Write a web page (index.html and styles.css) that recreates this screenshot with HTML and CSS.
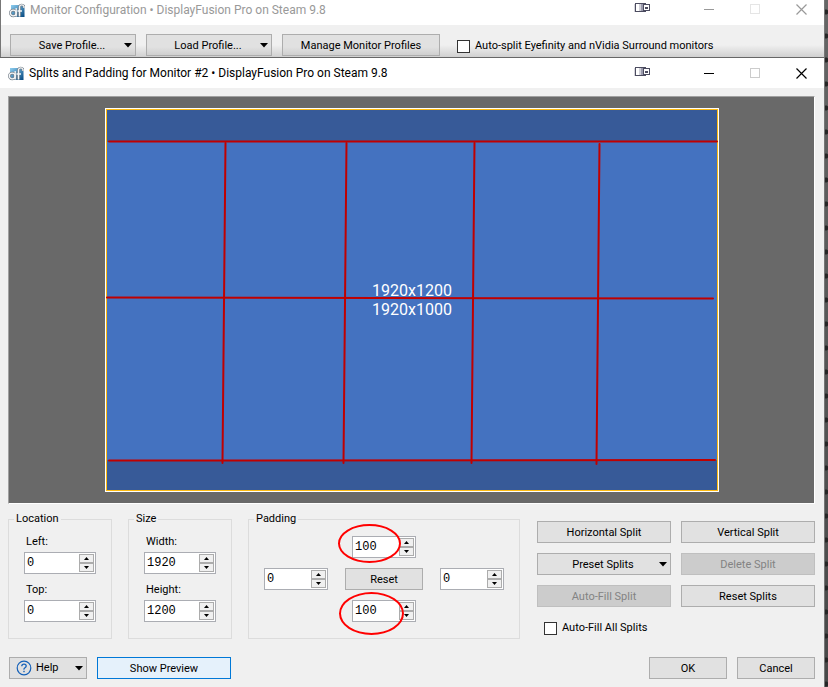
FILE: index.html
```
<!DOCTYPE html>
<html lang="en">
<head>
<meta charset="utf-8">
<title>Splits and Padding for Monitor #2</title>
<link rel="stylesheet" href="styles.css">
</head>
<body>
<svg class="defs" aria-hidden="true">
  <linearGradient id="tile" x1="0" y1="0" x2="1" y2="1"><stop offset="0" stop-color="#8fd0f2"/><stop offset="1" stop-color="#05477f"/></linearGradient>
  <symbol id="app" viewBox="0 0 16 16">
    <rect x="2" y="3" width="13.500" height="12" fill="url(#tile)"/>
    <g fill="none" stroke="#77818a" stroke-width="2.600"><circle cx="4.200" cy="11" r="2.900"/><path d="M7.200 14.500V7M10.500 14.500V4.500A2.400 2.400 0 0 1 15 4.500V6"/></g>
    <g fill="none" stroke="#f4f6f8" stroke-width="1.300"><circle cx="4.200" cy="11" r="2.900"/><path d="M7.200 14.500V6M10.500 14.500V4.500A2.400 2.400 0 0 1 15 4.500V6M8.500 9H13"/></g>
  </symbol>
  <symbol id="monitors" viewBox="0 0 17 11">
    <path d="M0 2H6V10H0Z" fill="#d5d5dc"/>
    <rect x="1.500" y="1.500" width="10" height="8" fill="#fff" stroke="#4c4c60"/>
    <path d="M5 2H7V9H5Z" fill="#d0d0d8"/><path d="M7 2H9V9H7Z" fill="#9a9aac"/>
    <rect x="9.500" y="2.500" width="6" height="6" fill="#fff" stroke="#4c4c60"/><path d="M11 5H14V7H11Z" fill="#4c4c60"/>
  </symbol>
  <symbol id="min" viewBox="0 0 11 11"><path d="M0 5.500H10" stroke="currentColor"/></symbol>
  <symbol id="max" viewBox="0 0 11 11"><rect x=".5" y=".5" width="9" height="9" fill="none" stroke="currentColor"/></symbol>
  <symbol id="close" viewBox="0 0 11 11"><path d="M.5 .5L10.500 10.500M10.500 .5L.5 10.500" stroke="currentColor" stroke-width="1.200"/></symbol>
  <symbol id="down" viewBox="0 0 8 5"><path d="M0 0H8L4 4.600Z" fill="#000"/></symbol>
  <symbol id="tiny-up" viewBox="0 0 5 3"><path d="M0 3L2.500 0L5 3Z" fill="#000"/></symbol>
  <symbol id="tiny-down" viewBox="0 0 5 3"><path d="M0 0L2.500 3L5 0Z" fill="#000"/></symbol>
</svg>
<div class="desktop">
  <main class="windows">
    <section class="window back">
      <header class="titlebar">
        <svg class="app-icon"><use href="#app"/></svg>
        <h2>Monitor Configuration • DisplayFusion Pro on Steam 9.8</h2>
        <button class="cap screens" aria-label="Move to next monitor"><svg><use href="#monitors"/></svg></button>
        <button class="cap" aria-label="Minimize"><svg><use href="#min"/></svg></button>
        <button class="cap pale" aria-label="Maximize" disabled><svg><use href="#max"/></svg></button>
        <button class="cap" aria-label="Close"><svg><use href="#close"/></svg></button>
      </header>
      <div class="toolbar">
        <button class="btn menu"><span>Save Profile...</span><svg class="caret"><use href="#down"/></svg></button>
        <button class="btn menu"><span>Load Profile...</span><svg class="caret"><use href="#down"/></svg></button>
        <button class="btn manage">Manage Monitor Profiles</button>
        <label class="check"><input type="checkbox">Auto-split Eyefinity and nVidia Surround monitors</label>
      </div>
    </section>
    <section class="window front">
      <header class="titlebar">
        <svg class="app-icon"><use href="#app"/></svg>
        <h1>Splits and Padding for Monitor #2 • DisplayFusion Pro on Steam 9.8</h1>
        <button class="cap screens" aria-label="Move to next monitor"><svg><use href="#monitors"/></svg></button>
        <button class="cap" aria-label="Minimize"><svg><use href="#min"/></svg></button>
        <button class="cap pale" aria-label="Maximize" disabled><svg><use href="#max"/></svg></button>
        <button class="cap" aria-label="Close"><svg><use href="#close"/></svg></button>
      </header>
      <div class="content">
        <div class="canvas">
          <svg class="monitor" viewBox="0 0 614 384">
            <rect width="614" height="384" fill="#fff"/>
            <rect x="1" y="1" width="612" height="382" fill="#fdbb12"/>
            <rect x="2" y="2" width="610" height="380" fill="#375a98"/>
            <rect x="2" y="34" width="610" height="318" fill="#4472c0"/>
            <g class="sizes"><text x="307" y="188">1920x1200</text><text x="307" y="207">1920x1000</text></g>
            <g class="splits">
              <path d="M4 33.500H612M2 189.500L608 190.500M4 352.500L610 352"/>
              <path d="M120.500 35L117.500 355M241.500 35L238.500 355M369.500 35L366.500 355M494.500 36L491.500 356"/>
            </g>
          </svg>
        </div>
        <div class="controls">
          <fieldset class="pair">
            <legend>Location</legend>
            <label for="left">Left:</label>
            <div class="spin"><input id="left" value="0"><span class="steps"><button aria-label="Increase left"><svg><use href="#tiny-up"/></svg></button><button aria-label="Decrease left"><svg><use href="#tiny-down"/></svg></button></span></div>
            <label for="top">Top:</label>
            <div class="spin"><input id="top" value="0"><span class="steps"><button aria-label="Increase top"><svg><use href="#tiny-up"/></svg></button><button aria-label="Decrease top"><svg><use href="#tiny-down"/></svg></button></span></div>
          </fieldset>
          <fieldset class="pair">
            <legend>Size</legend>
            <label for="width">Width:</label>
            <div class="spin"><input id="width" value="1920"><span class="steps"><button aria-label="Increase width"><svg><use href="#tiny-up"/></svg></button><button aria-label="Decrease width"><svg><use href="#tiny-down"/></svg></button></span></div>
            <label for="height">Height:</label>
            <div class="spin"><input id="height" value="1200"><span class="steps"><button aria-label="Increase height"><svg><use href="#tiny-up"/></svg></button><button aria-label="Decrease height"><svg><use href="#tiny-down"/></svg></button></span></div>
          </fieldset>
          <fieldset class="padding">
            <legend>Padding</legend>
            <div class="spin north"><input aria-label="Top padding" value="100"><span class="steps"><button aria-label="Increase top padding"><svg><use href="#tiny-up"/></svg></button><button aria-label="Decrease top padding"><svg><use href="#tiny-down"/></svg></button></span><span class="ring"></span></div>
            <div class="spin west"><input aria-label="Left padding" value="0"><span class="steps"><button aria-label="Increase left padding"><svg><use href="#tiny-up"/></svg></button><button aria-label="Decrease left padding"><svg><use href="#tiny-down"/></svg></button></span></div>
            <button class="btn reset">Reset</button>
            <div class="spin east"><input aria-label="Right padding" value="0"><span class="steps"><button aria-label="Increase right padding"><svg><use href="#tiny-up"/></svg></button><button aria-label="Decrease right padding"><svg><use href="#tiny-down"/></svg></button></span></div>
            <div class="spin south"><input aria-label="Bottom padding" value="100"><span class="steps"><button aria-label="Increase bottom padding"><svg><use href="#tiny-up"/></svg></button><button aria-label="Decrease bottom padding"><svg><use href="#tiny-down"/></svg></button></span><span class="ring tall"></span></div>
          </fieldset>
          <div class="actions">
            <button class="btn">Horizontal Split</button>
            <button class="btn">Vertical Split</button>
            <button class="btn menu"><span>Preset Splits</span><svg class="caret"><use href="#down"/></svg></button>
            <button class="btn" disabled>Delete Split</button>
            <button class="btn" disabled>Auto-Fill Split</button>
            <button class="btn">Reset Splits</button>
            <label class="check"><input type="checkbox">Auto-Fill All Splits</label>
          </div>
        </div>
        <footer class="footer">
          <button class="btn help"><svg class="question" viewBox="0 0 16 16"><circle cx="8" cy="8" r="6.800" fill="none" stroke="#1460b8" stroke-width="1.200"/><path d="M5.800 6.300Q5.800 4.200 8 4.200T10.200 6.100Q10.200 7.100 9 7.800T8 9.700" fill="none" stroke="#1460b8" stroke-width="1.300"/><rect x="7.300" y="10.800" width="1.400" height="1.400" fill="#1460b8"/></svg><span>Help</span><svg class="caret"><use href="#down"/></svg></button>
          <button class="btn preview">Show Preview</button>
          <button class="btn ok">OK</button>
          <button class="btn cancel">Cancel</button>
        </footer>
      </div>
    </section>
  </main>
  <aside class="edge"></aside>
</div>
</body>
</html>
```
FILE: styles.css
```
* { box-sizing: border-box; }
body, h1, h2, fieldset { margin: 0; }
body, button, input {
  font-family: Roboto, "Noto Sans", sans-serif;
  font-size: 11px;
  line-height: 14px;
  color: #000;
}
button { margin: 0; padding: 0; }
svg { display: block; flex: none; }
.defs { position: absolute; width: 0; height: 0; }

.desktop { display: flex; min-height: 100vh; background: #f0f0f0; }
.windows { flex: 1; min-width: 0; display: flex; flex-direction: column; }
.edge {
  width: 4px;
  border-left: 1px solid #777;
  background: radial-gradient(circle at 1px 12px, #252525 0 2px, transparent 3px) 0 0 / 3px 24px, linear-gradient(#666, #484848);
}

/* Title bars */
.titlebar { display: flex; align-items: center; background: #fff; }
.titlebar h1, .titlebar h2 {
  flex: 1;
  min-width: 0;
  margin-left: 5px;
  font-size: 12px;
  line-height: 16px;
  font-weight: 400;
  white-space: nowrap;
}
.app-icon { width: 16px; height: 16px; }
.cap { width: 46px; display: flex; justify-content: center; background: none; border: 0; color: #000; }
.cap svg { width: 11px; height: 11px; }
.cap.screens svg { width: 17px; }
.cap.pale { color: #ccc; }
.screens { margin-right: 21px; padding-bottom: 4px; }

.back { border-left: 1px solid #777; background: linear-gradient(#f0f0f0 45px, #d0d0d0); }
.back .titlebar { height: 25px; padding: 0 0 6px 8px; }
.back h2 { color: #999; }
.back .cap { color: #999; }
.back .cap.pale { color: #e5e5e5; }
.toolbar { display: flex; align-items: center; gap: 10px; padding: 9px 9px 1px; }
.toolbar .menu { width: 126px; }
.manage { width: 158px; }
.toolbar .check { margin-left: 7px; padding-top: 2px; }

.front { flex: 1; border-top: 1px solid #666; }
.front .titlebar { height: 30px; padding-left: 8px; }

/* Buttons */
.btn { height: 22px; padding-top: 1px; border: 1px solid #adadad; background: #e1e1e1; white-space: nowrap; }
.btn:disabled { border-color: #bfbfbf; background: #ccc; color: #838383; }
.toolbar .btn { background: linear-gradient(#e1e1e1 12px, #cfcfcf); }
.menu { display: flex; align-items: center; padding: 1px 3px 0 9px; }
.menu span { flex: 1; }
.caret { width: 8px; height: 5px; }
.check { display: flex; align-items: center; gap: 5px; white-space: nowrap; }
.check input { appearance: none; width: 13px; height: 13px; margin: 0; border: 1px solid #333; background: #fff; }

/* Preview */
.content { padding: 8px 9px 8px 8px; }
.canvas {
  display: grid;
  place-items: center;
  padding: 11px;
  border: 1px solid;
  border-color: #a0a0a0 #fff #fff #a0a0a0;
  background: #696969;
}
.monitor { width: 614px; max-width: 100%; height: auto; }
.sizes { fill: #fff; font-size: 16px; text-anchor: middle; }
.splits { fill: none; stroke: #c00000; stroke-width: 2px; stroke-linecap: round; }

/* Settings */
.controls { display: grid; grid-template-columns: 104fr 104fr 272fr 279fr; gap: 16px; margin-top: 8px; }
fieldset { min-width: 0; min-height: 127px; padding: 8px 15px 0; border: 1px solid #dcdcdc; }
legend { margin-left: -10px; padding: 0 2px; }
.pair label { display: block; padding: 1px 0 3px 2px; }
.pair .spin { margin-bottom: 8px; }
.spin { position: relative; display: flex; height: 22px; padding: 1px; border: 1px solid #abadb3; background: #fff; }
.spin input {
  flex: 1;
  min-width: 0;
  height: 16px;
  padding: 1px 0 0 1px;
  border: 0;
  background: none;
  font-family: "Liberation Mono", monospace;
  font-size: 12px;
}
.steps { display: flex; flex-direction: column; width: 15px; }
.steps button { flex: 1; display: grid; place-items: center; border: 1px solid #acacac; background: #f0f0f0; }
.steps svg { width: 5px; height: 3px; }
.padding { display: grid; grid-template: "a n b" 22px "w r e" 22px "c s d" 22px / 64px 1fr 64px; gap: 10px; padding-top: 10px; }
.padding .spin, .reset { justify-self: center; width: 64px; }
.north { grid-area: n; }
.west { grid-area: w; }
.east { grid-area: e; }
.south { grid-area: s; }
.padding .reset { grid-area: r; width: 78px; }
.ring { position: absolute; left: -15px; top: -13px; width: 63px; height: 39px; border: 2px solid #f00; border-radius: 50%; }
.ring.tall { left: -14px; top: -9px; width: 65px; height: 43px; }

.actions { display: grid; grid-template-columns: 1fr 1fr; align-content: start; gap: 10px; padding: 9px 0 0 1px; }
.actions .check { grid-column: span 2; margin: 4px 0 0 7px; }

.footer { display: flex; gap: 10px; margin-top: 18px; padding-left: 1px; }
.footer .btn { width: 78px; }
.footer .preview { width: 134px; border-color: #0078d7; background: #e5f1fb; }
.help { display: flex; align-items: center; gap: 4px; padding: 0 3px 0 6px; }
.help span { flex: 1; text-align: left; }
.question { width: 16px; height: 16px; }
.ok { margin-left: auto; }
```
